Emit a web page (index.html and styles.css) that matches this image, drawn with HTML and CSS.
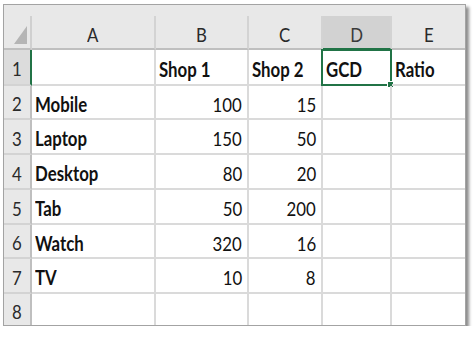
FILE: index.html
```html
<!DOCTYPE html>
<html>
<head>
<meta charset="utf-8">
<link rel="stylesheet" href="styles.css">
</head>
<body>
<div class="sheet">
  <div class="strip"></div>
  <div class="grid">
    <div class="corner"><span class="tri"></span></div>
    <div class="ch"><span class="t">A</span></div>
    <div class="ch"><span class="t">B</span></div>
    <div class="ch"><span class="t">C</span></div>
    <div class="ch ch-active"><span class="t">D</span></div>
    <div class="ch last"><span class="t">E</span></div>

    <div class="rh rh-active"><span class="t">1</span></div>
    <div class="c"></div>
    <div class="c"><span class="t">Shop 1</span></div>
    <div class="c"><span class="t">Shop 2</span></div>
    <div class="c sel"><span class="t">GCD</span><span class="box"></span><span class="handle"></span></div>
    <div class="c last"><span class="t">Ratio</span></div>

    <div class="rh"><span class="t">2</span></div>
    <div class="c"><span class="t">Mobile</span></div>
    <div class="c n"><span class="t">100</span></div>
    <div class="c n"><span class="t">15</span></div>
    <div class="c"></div>
    <div class="c last"></div>

    <div class="rh"><span class="t">3</span></div>
    <div class="c"><span class="t">Laptop</span></div>
    <div class="c n"><span class="t">150</span></div>
    <div class="c n"><span class="t">50</span></div>
    <div class="c"></div>
    <div class="c last"></div>

    <div class="rh"><span class="t">4</span></div>
    <div class="c"><span class="t">Desktop</span></div>
    <div class="c n"><span class="t">80</span></div>
    <div class="c n"><span class="t">20</span></div>
    <div class="c"></div>
    <div class="c last"></div>

    <div class="rh"><span class="t">5</span></div>
    <div class="c"><span class="t">Tab</span></div>
    <div class="c n"><span class="t">50</span></div>
    <div class="c n"><span class="t">200</span></div>
    <div class="c"></div>
    <div class="c last"></div>

    <div class="rh"><span class="t">6</span></div>
    <div class="c"><span class="t">Watch</span></div>
    <div class="c n"><span class="t">320</span></div>
    <div class="c n"><span class="t">16</span></div>
    <div class="c"></div>
    <div class="c last"></div>

    <div class="rh"><span class="t">7</span></div>
    <div class="c"><span class="t">TV</span></div>
    <div class="c n"><span class="t">10</span></div>
    <div class="c n"><span class="t">8</span></div>
    <div class="c"></div>
    <div class="c last"></div>

    <div class="rh bottom"><span class="t">8</span></div>
    <div class="c bottom"></div>
    <div class="c bottom"></div>
    <div class="c bottom"></div>
    <div class="c bottom"></div>
    <div class="c last bottom"></div>
  </div>
</div>
</body>
</html>
```

FILE: styles.css
```css
html, body {
  margin: 0;
  padding: 0;
  background: #ffffff;
}

body {
  font-family: Lato, "Liberation Sans", sans-serif;
}

.sheet {
  margin: 4px 0 0 3px;
  width: 461px;
  border: 1px solid #a3a3a3;
  box-shadow: 3px 3px 3px rgba(0, 0, 0, 0.45);
  background: #ffffff;
}

.strip {
  height: 11px;
  background: #e8e8e8;
}

.grid {
  display: grid;
  grid-template-columns: 28px 124px 93px 74px 69px 73px;
  grid-template-rows: 34px 36px 34px 35px 35px 35px 34px 35px 31px;
}

.t {
  display: inline-block;
  transform: scaleX(0.84);
  transform-origin: left center;
}

.corner {
  background: #e8e8e8;
  border-bottom: 2px solid #bfbfbf;
  border-right: 2px solid #d0d0d0;
  display: flex;
  align-items: flex-end;
  justify-content: flex-end;
  padding: 0 3px 4px 0;
}

.tri {
  width: 0;
  height: 0;
  border-style: solid;
  border-width: 0 0 18px 13px;
  border-color: transparent transparent #b5b5b5 transparent;
}

.ch {
  background: #e8e8e8;
  border-bottom: 2px solid #bfbfbf;
  border-right: 2px solid #d3d3d3;
  display: flex;
  align-items: center;
  justify-content: center;
  font-size: 20px;
  color: #2a2a2a;
  padding-top: 3px;
}

.ch .t,
.rh .t {
  transform-origin: center center;
}

.ch.last {
  border-right: none;
}

.ch-active {
  background: #d2d2d2;
  border-bottom: 2px solid #217346;
  color: #3a3a3a;
}

.rh {
  background: #e8e8e8;
  border-right: 2px solid #bfbfbf;
  border-bottom: 2px solid #d3d3d3;
  display: flex;
  align-items: center;
  justify-content: center;
  font-size: 20px;
  color: #2a2a2a;
  padding-top: 2px;
}

.rh-active {
  background: #dcdcdc;
  border-right: 2px solid #217346;
}

.c {
  position: relative;
  border-right: 2px solid #dadada;
  border-bottom: 2px solid #dadada;
  display: flex;
  align-items: center;
  padding: 3px 3px 0 3px;
  font-size: 20px;
  font-weight: bold;
  color: #111111;
  white-space: nowrap;
}

.c.last {
  border-right: none;
}

.bottom {
  border-bottom: none;
}

.n {
  justify-content: flex-end;
  font-weight: normal;
  padding-right: 5px;
}

.n .t {
  transform-origin: right center;
}

.box {
  position: absolute;
  left: -2px;
  top: -1px;
  right: -2px;
  bottom: -2px;
  border: 2px solid #217346;
}

.handle {
  position: absolute;
  right: -4px;
  bottom: -4px;
  width: 5px;
  height: 5px;
  background: #217346;
  border: 1px solid #ffffff;
}
```
